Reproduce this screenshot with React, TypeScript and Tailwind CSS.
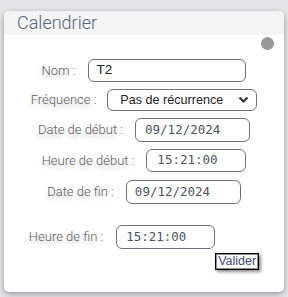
const label = "font-['Roboto',sans-serif] font-light text-[13px] text-[#5f5f5f] [text-shadow:0_3px_5px_rgba(0,0,0,0.28)] whitespace-nowrap";
const box = "flex items-center border border-[#6b7280] rounded-[6px] bg-white";
const mono = "font-['DejaVu_Sans_Mono',monospace] text-[12.5px] text-[#4b5563]";

const App = () => {
  return (
    <div className="w-[288px] h-[297px] bg-[#e6e6ea] pt-[11px] pl-[4px]">
      <div className="w-[280px] h-[281px] bg-white rounded-[5px] shadow-[0_2px_6px_rgba(0,0,0,0.35)] overflow-hidden flex flex-col">
        <div className="h-[24px] bg-[#f4f4f5] pl-[13px] flex items-center">
          <span className="font-['Roboto',sans-serif] font-light text-[18px] leading-none text-[#56677d]">
            Calendrier
          </span>
        </div>
        <div className="relative flex-1 pt-[24px] flex flex-col items-center">
          <span className="absolute top-[2px] right-[10px] w-[13px] h-[13px] rounded-full bg-[#999]" />

          <div className="flex items-center gap-[13px]">
            <span className={label}>Nom :</span>
            <div className={`${box} w-[158px] h-[23px] pl-[7px]`}>
              <span className="font-['Liberation_Sans',sans-serif] text-[13.5px] text-[#222]">T2</span>
            </div>
          </div>

          <div className="flex items-center gap-[11px] mt-[7px]">
            <span className={label}>Fréquence :</span>
            <div className={`${box} w-[150px] h-[22px] pl-[12px] pr-[7px] justify-between`}>
              <span className="font-['Liberation_Sans',sans-serif] text-[12.6px] text-[#222]">Pas de récurrence</span>
              <svg width="11" height="8" viewBox="0 0 11 8">
                <path d="M1.5 1.5 L5.5 5.5 L9.5 1.5" fill="none" stroke="#333" strokeWidth="2.2" />
              </svg>
            </div>
          </div>

          <div className="flex items-center gap-[12px] mt-[7px]">
            <span className={label}>Date de début :</span>
            <div className={`${box} w-[115px] h-[24px] pl-[9px]`}>
              <span className={mono}>09/12/2024</span>
            </div>
          </div>

          <div className="flex items-center gap-[12px] mt-[7px]">
            <span className={label}>Heure de début :</span>
            <div className={`${box} w-[100px] h-[23px] pl-[10px]`}>
              <span className={mono}>15:21:00</span>
            </div>
          </div>

          <div className="flex items-center gap-[12px] mt-[8px]">
            <span className={label}>Date de fin :</span>
            <div className={`${box} w-[115px] h-[24px] pl-[8px]`}>
              <span className={mono}>09/12/2024</span>
            </div>
          </div>

          <div className="flex items-start mt-[21px]">
            <div className="flex items-center gap-[13px]">
              <span className={label}>Heure de fin :</span>
              <div className={`${box} w-[99px] h-[24px] pl-[9px]`}>
                <span className={mono}>15:21:00</span>
              </div>
            </div>
            <button
              type="button"
              className="mt-[28px] h-[17px] px-[2px] border border-black bg-white shadow-[inset_0_0_0_1px_#8a8a8a,2px_2px_3px_rgba(0,0,0,0.45)] font-['Liberation_Sans',sans-serif] text-[12.5px] leading-none text-[#3d4a7a]"
            >
              Valider
            </button>
          </div>
        </div>
      </div>
    </div>
  );
};

export default App;
